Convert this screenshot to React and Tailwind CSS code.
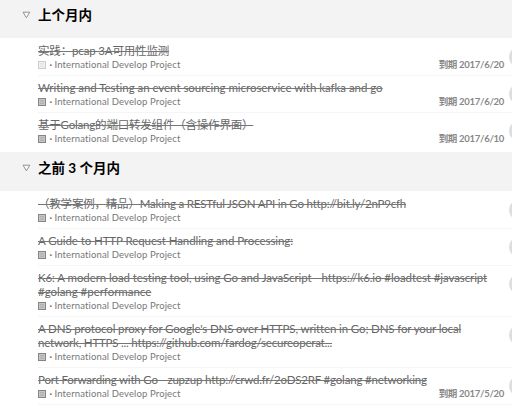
const sections = [
  {
    title: '上个月内',
    header: 'h-[38px] pb-[9px]',
    list: 'pt-px pb-[2px]',
    tasks: [
      { lines: [['实践：pcap 3A可用性监测', 'tracking-[-0.16px]']], due: '到期 2017/6/20', size: 'h-[37px]', light: true },
      { lines: [['Writing and Testing an event sourcing microservice with kafka and go', 'tracking-[-0.045px]']], due: '到期 2017/6/20', size: 'h-[37px]' },
      { lines: [['基于Golang的端口转发组件（含操作界面）', 'tracking-[-0.2px]']], due: '到期 2017/6/10', size: 'h-[37px]', last: true },
    ],
  },
  {
    title: '之前 3 个月内',
    header: 'h-[39px] pb-[7px]',
    list: 'pt-px',
    tasks: [
      { lines: [['（教学案例，精品）Making a RESTful JSON API in Go http://bit.ly/2nP9cfh', 'tracking-[-0.2px]']], size: 'h-[37px]' },
      { lines: [['A Guide to HTTP Request Handling and Processing:', 'tracking-[-0.08px]']], size: 'h-[37px]' },
      { lines: [['K6: A modern load testing tool, using Go and JavaScript - https://k6.io #loadtest #javascript', 'tracking-[-0.09px]'], ['#golang #performance', 'tracking-[-0.03px]']], size: 'h-[51px]' },
      { lines: [["A DNS protocol proxy for Google's DNS over HTTPS, written in Go; DNS for your local", 'tracking-[-0.13px]'], ['network, HTTPS ... https://github.com/fardog/secureoperat...', 'tracking-[-0.2px]']], size: 'h-[51px]' },
      { lines: [['Port Forwarding with Go - zupzup http://crwd.fr/2oDS2RF #golang #networking', 'tracking-[-0.19px]']], due: '到期 2017/5/20', size: 'h-[37px]' },
    ],
  },
];

function NoteIcon({ light }) {
  return (
    <svg className="mr-[3.5px] h-2 w-2 shrink-0" viewBox="0 0 8 8" aria-hidden="true">
      <rect x="0.5" y="0.5" width="7" height="7" fill={light ? '#f1f1f1' : '#c6c6c6'} stroke={light ? '#cdcdcd' : '#858585'} />
      <path d="M2 2.5h4M2 4h4M2 5.5h4" stroke={light ? '#dddddd' : '#a5a5a5'} strokeWidth=".6" />
    </svg>
  );
}

function Task({ task }) {
  return (
    <li className={`flex pt-[5px] ${task.size} ${task.last ? '' : 'border-b border-[#f5f5f5]'}`}>
      <div className="flex w-[466px] shrink-0 flex-col">
        {task.lines.map(([text, tracking]) => (
          <div key={text} className="h-[14px] text-[11.5px] leading-[14px] text-[#666]">
            <span className={`whitespace-pre line-through decoration-[#777] decoration-1 ${tracking}`}>{text}</span>
          </div>
        ))}
        <div className="flex h-[14px] items-center text-[9.5px] leading-[14px] text-[#777]">
          <NoteIcon light={task.light} />
          <span className="w-[5px] whitespace-pre font-bold">·</span>
          <span className="whitespace-pre tracking-[0.13px]">International Develop Project</span>
          {task.due && <span className="ml-auto whitespace-pre text-[9.5px] font-bold tracking-[-0.28px] text-[#888]">{task.due}</span>}
        </div>
      </div>
      <div className="ml-[5px] mt-[2px] h-[22px] w-[22px] shrink-0 rounded-full bg-[#dedede]" />
    </li>
  );
}

export default function App() {
  return (
    <main className="h-[409px] w-[512px] overflow-hidden bg-white font-['Lato','Noto_Sans_CJK_SC',sans-serif]">
      {sections.map((section) => (
        <section key={section.title}>
          <h2 className={`flex items-center bg-[#f3f3f3] pl-[22px] ${section.header}`}>
            <svg className="mr-[7px] h-[8px] w-[9px]" viewBox="0 0 9 8" aria-hidden="true">
              <path d="M1 1.2h6.8L4.4 6.8z" fill="#fafafa" stroke="#888" strokeWidth=".9" />
            </svg>
            <span className="whitespace-pre text-[13.5px] font-bold leading-[18px] text-black">{section.title}</span>
          </h2>
          <ul className={`pl-[38px] ${section.list}`}>
            {section.tasks.map((task) => <Task key={task.lines[0][0]} task={task} />)}
          </ul>
        </section>
      ))}
    </main>
  );
}
